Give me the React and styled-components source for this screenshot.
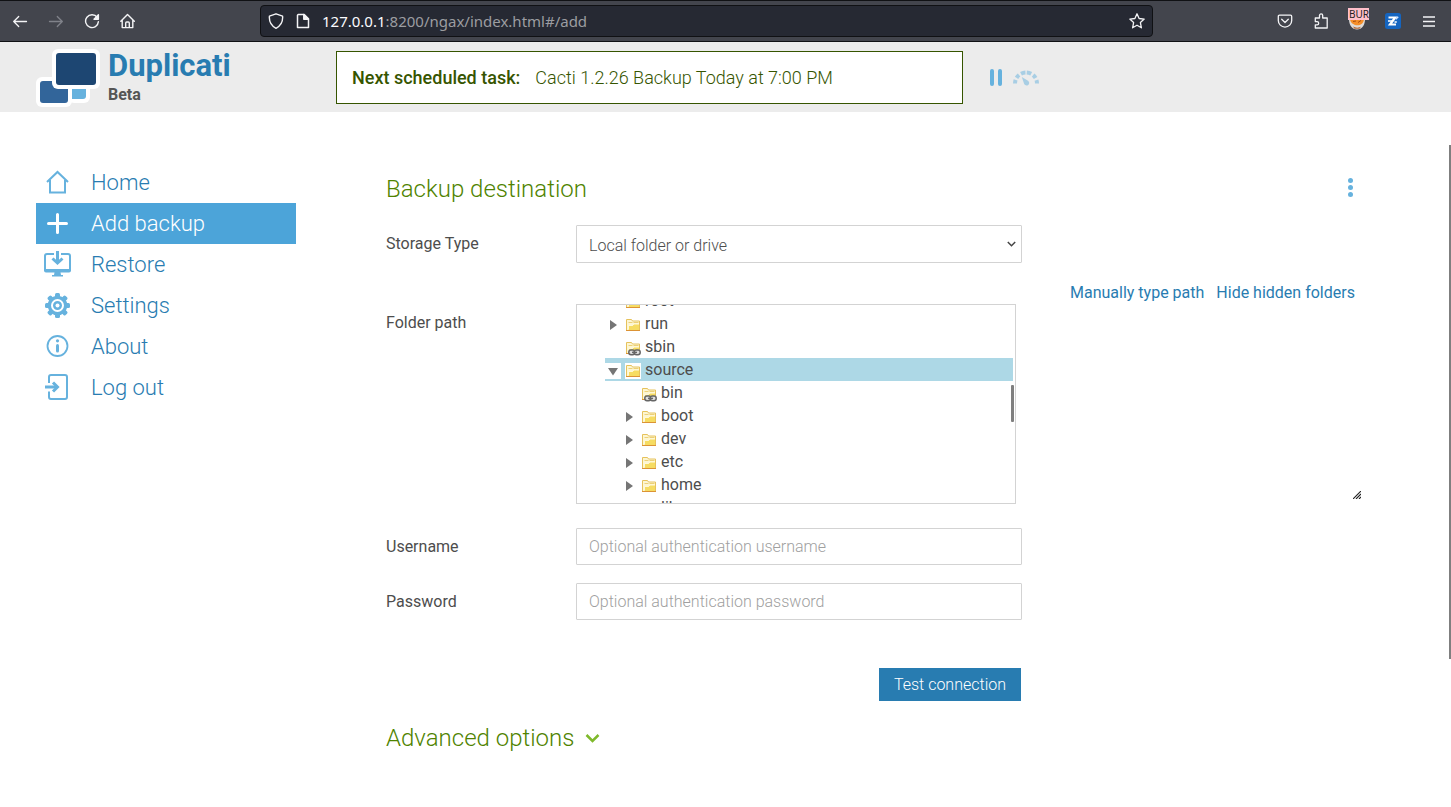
import React, { useState } from 'react';
import styled, { createGlobalStyle } from 'styled-components';

const GlobalStyle = createGlobalStyle`
  * {
    box-sizing: border-box;
  }

  body {
    margin: 0;
    background-color: #fff;
    color: #4d4d4d;
    font-family: Roboto, 'Noto Sans', sans-serif;
    font-size: 16px;
    line-height: 20px;
  }

  button, input, select {
    font-family: inherit;
    font-size: inherit;
  }

  svg {
    display: block;
    flex: none;
  }
`;

/* Browser toolbar */

const BrowserBar = styled.div`
  display: flex;
  align-items: center;
  justify-content: space-between;
  height: 42px;
  padding: 0 4px 0 2px;
  background-color: #43454d;
  border-top: 1px solid #101114;
  border-bottom: 1px solid #101114;
`;

const BarGroup = styled.div`
  display: flex;
  align-items: center;
`;

const BarButton = styled.button`
  display: flex;
  align-items: center;
  justify-content: center;
  width: 36px;
  height: 32px;
  padding: 0;
  border: 0;
  background: none;
  color: ${(props) => (props.disabled ? '#80828a' : '#f4f4f6')};
`;

const UrlBar = styled.div`
  display: flex;
  align-items: center;
  flex: 0 1 893px;
  gap: 11px;
  height: 32px;
  padding: 0 7px;
  background-color: #262933;
  border: 1px solid #101114;
  border-radius: 4px;
  color: #f4f4f6;
`;

const Url = styled.div`
  flex: 1;
  color: #9c9da1;
  font-family: 'Noto Sans', sans-serif;
  font-size: 15px;

  span {
    color: #fbfbfe;
  }
`;

const Extension = styled.span`
  position: relative;
  display: block;
`;

const ExtensionBadge = styled.span`
  position: absolute;
  top: -4px;
  left: 0;
  width: 21px;
  height: 12px;
  padding-left: 1px;
  overflow: hidden;
  background-color: #ffc0cb;
  color: #222;
  font-family: 'Noto Sans', sans-serif;
  font-size: 10px;
  line-height: 12px;
`;

/* Application header */

const Header = styled.header`
  display: grid;
  grid-template-columns: 260px minmax(0, 627px) auto;
  align-items: center;
  height: 70px;
  padding: 1px 36px 0;
  background-color: #ececec;
`;

const Brand = styled.a`
  display: flex;
  align-items: center;
  gap: 8px;
  text-decoration: none;
`;

const BrandName = styled.div`
  color: #287cb1;
  font-size: 31px;
  font-weight: 700;
  line-height: 34px;
`;

const BrandChannel = styled.div`
  color: #555;
  font-size: 16px;
  font-weight: 700;
  line-height: 24px;
`;

const StatusBar = styled.div`
  display: grid;
  grid-template-columns: minmax(0, 627px) auto;
  grid-column: 2 / 4;
  align-items: center;
  gap: 27px;
  padding-left: 40px;
`;

const StatusBox = styled.div`
  display: flex;
  align-items: center;
  gap: 15px;
  height: 53px;
  padding: 0 15px;
  background-color: #fff;
  border: 1px solid #365500;
  color: #365500;
  font-size: 18px;
  font-weight: 300;

  strong {
    font-weight: 500;
  }
`;

const StatusControls = styled.div`
  display: flex;
  align-items: center;
  gap: 10px;
`;

const IconButton = styled.button`
  display: flex;
  padding: 0;
  border: 0;
  background: none;
  color: #66b2de;
  cursor: pointer;
  opacity: ${(props) => (props.$faded ? 0.5 : 1)};
`;

/* Page body */

const Page = styled.div`
  display: grid;
  grid-template-columns: 260px minmax(0, 1fr);
  column-gap: 90px;
  padding: 50px 86px 40px 36px;
`;

const Menu = styled.nav`
  display: flex;
  flex-direction: column;
`;

const MenuLink = styled.a`
  display: flex;
  align-items: center;
  gap: 18px;
  height: 41px;
  padding-left: 6px;
  background-color: ${(props) => (props.$active ? '#4ca4d9' : 'transparent')};
  color: ${(props) => (props.$active ? '#fff' : '#287cb1')};
  font-size: 22px;
  font-weight: 300;
  text-decoration: none;

  svg {
    color: ${(props) => (props.$active ? '#fff' : '#66b2de')};
  }
`;

const Content = styled.main`
  display: grid;
  grid-template-columns: minmax(0, 636px) minmax(0, 1fr);
  column-gap: 48px;
`;

const Form = styled.form`
  display: flex;
  flex-direction: column;
`;

const Title = styled.h2`
  margin: 0;
  padding: 12px 0 21px;
  color: #4f8300;
  font-size: 24px;
  font-weight: 300;
  line-height: 30px;
`;

const Field = styled.div`
  display: grid;
  grid-template-columns: 190px minmax(0, 1fr);
  align-items: start;
  margin-bottom: ${(props) => props.$space || 18}px;
`;

const Label = styled.label`
  padding-top: 9px;
`;

const SelectWrap = styled.div`
  position: relative;

  svg {
    position: absolute;
    top: 15px;
    right: 6px;
    pointer-events: none;
  }
`;

const Select = styled.select`
  display: block;
  width: 100%;
  height: 38px;
  padding: 2px 12px 0;
  appearance: none;
  background-color: #fff;
  border: 1px solid #d3d3d3;
  border-radius: 1px;
  color: #4d4d4d;
  font-weight: 300;
`;

const TextInput = styled.input`
  display: block;
  width: 100%;
  height: 37px;
  padding: 0 12px;
  border: 1px solid #d3d3d3;
  border-radius: 1px;
  color: #4d4d4d;
  font-weight: 300;

  &::placeholder {
    color: #a0a0a0;
    opacity: 1;
  }
`;

const TreeBox = styled.div`
  position: relative;
  height: 200px;
  margin-right: 6px;
  overflow: hidden;
  border: 1px solid #d3d3d3;
`;

const TreeList = styled.ul`
  margin: -16px 2px 0 28px;
  padding: 0;
  list-style: none;
`;

const TreeRow = styled.li`
  display: flex;
  align-items: flex-end;
  gap: 4px;
  height: 23px;
  padding: 0 0 2px ${(props) => props.$level * 16}px;
  background-color: ${(props) => (props.$selected ? '#add8e6' : 'transparent')};
`;

const TreeToggle = styled.button`
  width: 16px;
  height: 16px;
  padding: 0;
  border: 0;
  background-color: #fff;
`;

const TreeIcon = styled.span`
  width: 16px;
  height: 16px;
  background-color: #fff;
`;

const TreeName = styled.span`
  line-height: 18px;
`;

const TreeThumb = styled.span`
  position: absolute;
  top: 80px;
  right: 1px;
  width: 3px;
  height: 37px;
  background-color: #7f7f7f;
  border-radius: 1px;
`;

const Actions = styled.div`
  display: flex;
  justify-content: flex-end;
  padding: 30px 1px 20px 0;
`;

const PrimaryButton = styled.button`
  height: 33px;
  padding: 0 15px;
  border: 0;
  background-color: #287cb1;
  color: #fff;
  font-weight: 300;
  cursor: pointer;
`;

const AdvancedToggle = styled.button`
  display: flex;
  align-items: center;
  align-self: flex-start;
  gap: 11px;
  padding: 0;
  border: 0;
  background: none;
  color: #4f8300;
  font-size: 24px;
  font-weight: 300;
  line-height: 34px;
  cursor: pointer;
`;

const Side = styled.aside`
  display: flex;
  flex-direction: column;
  align-items: flex-end;
  padding: 16px 4px 0 0;
`;

const SideMenu = styled.div`
  padding-right: 8px;
`;

const PathLinks = styled.div`
  display: flex;
  align-self: flex-start;
  gap: 12px;
  padding: 86px 0 188px;
  white-space: nowrap;

  a {
    color: #287cb1;
    text-decoration: none;
  }
`;

const PageThumb = styled.div`
  position: fixed;
  top: 145px;
  right: 0;
  width: 2px;
  height: 514px;
  background-color: #7f7f7f;
`;

/* Icons */

const Line = ({ children, size = 16, width = 1.3 }) => (
  <svg
    width={size}
    height={size}
    viewBox="0 0 16 16"
    fill="none"
    stroke="currentColor"
    strokeWidth={width}
    strokeLinecap="round"
    strokeLinejoin="round"
  >
    {children}
  </svg>
);

const BackIcon = () => (
  <Line><path d="M14.5 8.500H1.700M6.700 3.500l-5 5 5 5" /></Line>
);

const ForwardIcon = () => (
  <Line><path d="M1.500 8.500h12.800M9.300 3.500l5 5-5 5" /></Line>
);

const ReloadIcon = () => (
  <Line width={1.4}>
    <path d="M13.200 4.400A6.400 6.400 0 1 0 14.400 8.600" />
    <path d="M14.400 1.800v4.400H10z" fill="currentColor" />
  </Line>
);

const HomeBarIcon = () => (
  <Line width={1.4}>
    <path d="M.8 8.200 7.500 1.400l6.800 6.800M2.200 7v7.600h10.600V7" />
    <path d="M5.700 14.400V10c0-.6.4-1 1-1h1.600c.6 0 1 .4 1 1v4.400" />
  </Line>
);

const ShieldIcon = () => (
  <Line width={1.4}><path d="M8 .8 14.600 3.200c.4 5-1.700 9.600-6.600 12.100C3.100 12.800 1 8.200 1.400 3.200z" /></Line>
);

const DocIcon = () => (
  <Line width={1.5}>
    <path d="M3.200 1.500h6l4.300 4.300v8.700H2.500v-12.200z" />
    <path d="M8.800 1.500v4.700h4.600z" fill="currentColor" />
  </Line>
);

const StarIcon = () => (
  <Line width={1.3}>
    <path d="m8 .8 2.100 4.700 5.100.6-3.800 3.500 1 5.200L8 12.200l-4.400 2.600 1-5.200L.8 6.100l5.100-.6z" />
  </Line>
);

const PocketIcon = () => (
  <Line width={1.3}>
    <path d="M2.500 2.200h11c.7 0 1.200.5 1.200 1.200v4a6.700 6.700 0 0 1-13.400 0v-4c0-.7.5-1.200 1.200-1.200z" />
    <path d="M4.700 6.300 8 9.500l3.300-3.200" />
  </Line>
);

const PuzzleIcon = () => (
  <Line width={1.3}>
    <path d="M2.300 15V11.800h1.800a1.600 1.600 0 0 0 0-3.200H2.300V5h4.200V2.500a1.600 1.600 0 0 1 3.200 0V5h4.500v10z" />
  </Line>
);

const BurpIcon = () => (
  <svg width="18" height="18" viewBox="0 0 18 18">
    <path d="M1 7h16c0 6-3 10.500-8 10.500S1 13 1 7z" fill="#dfdbd8" />
    <path d="M2 7h14c-.3 4-3 6.300-6.500 6.300S2.300 11 2 7z" fill="#f58f2a" />
    <path d="M5 9.500 8 9M10 10.500l3-2" stroke="#a84d12" />
    <path d="M5 14.500c2.500 1.500 6 1.500 8 0l-1.500 2.300h-5z" fill="#b56837" />
  </svg>
);

const ZIcon = () => (
  <svg width="16" height="16" viewBox="0 0 16 16">
    <rect width="16" height="16" rx="2.500" fill="#1565c0" />
    <path d="M3.500 4.500h6.700L5 11.500h6" fill="none" stroke="#fff" strokeWidth="2.200" />
    <path d="M3 8h4M9.500 9h2.300" stroke="#fff" strokeWidth="1.500" />
    <path d="m10.700 6.200 2.500-2.400" stroke="#cfe3ff" strokeWidth="1.500" />
  </svg>
);

const BarsIcon = () => (
  <svg width="12" height="11" viewBox="0 0 12 11">
    <path d="M0 1h12M0 5.500h12M0 10h12" stroke="currentColor" strokeWidth="1.300" />
  </svg>
);

const Logo = () => (
  <svg width="64" height="58" viewBox="0 0 64 58">
    <rect x="32" y="26" width="22" height="28" rx="6" fill="#fff" />
    <path d="M36 39h14v8a3 3 0 0 1-3 3H36z" fill="#66b2de" />
    <rect x="0" y="28" width="36" height="30" rx="6" fill="#fff" />
    <rect x="4" y="32" width="28" height="22" rx="3" fill="#32659a" />
    <rect x="16" y="0" width="48" height="40" rx="6" fill="#fff" />
    <rect x="20" y="4" width="40" height="32" rx="3" fill="#1d4672" />
  </svg>
);

const PauseIcon = () => (
  <svg width="12" height="17" viewBox="0 0 12 17" fill="currentColor">
    <rect width="4" height="17" rx="2" />
    <rect x="8" width="4" height="17" rx="2" />
  </svg>
);

const GaugeIcon = () => (
  <svg width="28" height="16" viewBox="0 0 28 16">
    <path
      d="M3 13.500a11 11 0 0 1 22 0"
      fill="none"
      stroke="currentColor"
      strokeWidth="4"
      strokeDasharray="3.600 2.300 3.800 2.300 4.600 1.360 4.600 2.300 3.800 2.300 3.600"
    />
    <path d="M9.800 7 16 10.700a2.600 2.600 0 1 1-3.900 3z" fill="currentColor" />
  </svg>
);

const MenuIcon = ({ children }) => (
  <svg width="31" height="31" viewBox="0 0 31 31" fill="none" stroke="currentColor" strokeWidth="2">
    {children}
  </svg>
);

const HomeIcon = () => (
  <MenuIcon>
    <path d="M5 15 15.500 5 26 15M8 13v12.500h15V13" />
  </MenuIcon>
);

const AddIcon = () => (
  <MenuIcon>
    <path d="M15.500 6.500v18M6.500 15.500h18" strokeWidth="3" strokeLinecap="round" />
  </MenuIcon>
);

const RestoreIcon = () => (
  <MenuIcon>
    <path d="M12 5H5a2 2 0 0 0-2 2v14h25V7a2 2 0 0 0-2-2h-7" />
    <path d="M2 20h27v1.500a2 2 0 0 1-2 2h-8.500l.5 2.500h2v1.500H10V26h2l.5-2.500H4a2 2 0 0 1-2-2z" fill="currentColor" stroke="none" />
    <path d="M15.500 2v11" strokeWidth="3" />
    <path d="m10.500 9.500 5 4.500 5-4.500" strokeWidth="3" />
  </MenuIcon>
);

const GearIcon = () => (
  <MenuIcon>
    {[0, 45, 90, 135].map((angle) => (
      <rect
        key={angle}
        x="13"
        y="3"
        width="5"
        height="25"
        rx="1.500"
        fill="currentColor"
        stroke="none"
        transform={`rotate(${angle} 15.500 15.500)`}
      />
    ))}
    <circle cx="15.500" cy="15.500" r="9.800" fill="currentColor" stroke="none" />
    <circle cx="15.500" cy="15.500" r="5.500" stroke="#fff" fill="none" />
    <circle cx="15.500" cy="15.500" r="2" fill="#fff" stroke="none" />
  </MenuIcon>
);

const InfoIcon = () => (
  <MenuIcon>
    <circle cx="15.500" cy="15" r="10" strokeWidth="1.800" />
    <circle cx="15.500" cy="9.800" r="1.600" fill="currentColor" stroke="none" />
    <path d="M15.500 14.500V20" strokeWidth="3" strokeLinecap="round" />
  </MenuIcon>
);

const LogoutIcon = () => (
  <MenuIcon>
    <path d="M7 11V5a2 2 0 0 1 2-2h14a2 2 0 0 1 2 2v20a2 2 0 0 1-2 2H9a2 2 0 0 1-2-2V19.500" />
    <path d="M3 15h12" strokeWidth="3" />
    <path d="m11 10.500 4.500 4.500-4.500 4.500" strokeWidth="3" />
  </MenuIcon>
);

const SelectArrow = () => (
  <svg width="9" height="8" viewBox="0 0 9 8">
    <path d="m.8 2 3.700 3.700L8.200 2" fill="none" stroke="#444" strokeWidth="1.500" />
  </svg>
);

const ChevronIcon = () => (
  <svg width="15" height="12" viewBox="0 0 15 12">
    <path d="m1.500 3 6 6 6-6" fill="none" stroke="#7fb92b" strokeWidth="2.500" />
  </svg>
);

const DotsIcon = () => (
  <svg width="5" height="19" viewBox="0 0 5 19" fill="currentColor">
    <circle cx="2.500" cy="2.500" r="2.500" />
    <circle cx="2.500" cy="9.500" r="2.500" />
    <circle cx="2.500" cy="16.500" r="2.500" />
  </svg>
);

const GripIcon = () => (
  <svg width="8" height="8" viewBox="0 0 8 8">
    <path d="M0 8 8 0M3 8l5-5M6 8l2-2" stroke="#222" strokeWidth="1.100" />
  </svg>
);

const Triangle = ({ open }) => (
  <svg width="16" height="16" viewBox="0 0 16 16">
    <path d={open ? 'M3 5h10l-5 7.500z' : 'M5 3l7 5-7 5z'} fill="#757575" />
  </svg>
);

const FolderIcon = ({ linked }) => (
  <svg width="16" height="16" viewBox="0 0 16 16">
    <path d="M1.500 13.500v-11h5l1 1.500h7v9.500z" fill="#fdf6d2" stroke="#e6c25c" />
    <path d="M3.500 5.500h4M8.500 5.500h5" stroke="#ecd078" />
    <path d="M3.500 13V9h4l1.500-2h5v6z" fill="#f6dc62" />
    <path d="M3.500 12.500V8.500h4L9 7h5" fill="none" stroke="#fff8d8" />
    <path d="M1 13.500h14" stroke="#dc9335" />
    {linked && (
      <g fill="#ddd" stroke="#666" strokeWidth="1.500">
        <rect x="3.800" y="10" width="6" height="4.800" rx="2.200" />
        <rect x="9.200" y="10" width="6" height="4.800" rx="2.200" />
        <path d="M7 12.400h5" />
      </g>
    )}
  </svg>
);

const menuItems = [
  { label: 'Home', href: '#/', Icon: HomeIcon },
  { label: 'Add backup', href: '#/add', Icon: AddIcon },
  { label: 'Restore', href: '#/restore', Icon: RestoreIcon },
  { label: 'Settings', href: '#/settings', Icon: GearIcon },
  { label: 'About', href: '#/about', Icon: InfoIcon },
  { label: 'Log out', href: '#/logout', Icon: LogoutIcon },
];

const folders = [
  { name: 'root', level: 0, leaf: true },
  { name: 'run', level: 0 },
  { name: 'sbin', level: 0, leaf: true, linked: true },
  { name: 'source', level: 0, open: true },
  { name: 'bin', level: 1, leaf: true, linked: true },
  { name: 'boot', level: 1 },
  { name: 'dev', level: 1 },
  { name: 'etc', level: 1 },
  { name: 'home', level: 1 },
  { name: 'lib', level: 1, leaf: true, linked: true },
];

const BrowserToolbar = () => (
  <BrowserBar>
    <BarGroup>
      <BarButton aria-label="Back"><BackIcon /></BarButton>
      <BarButton aria-label="Forward" disabled><ForwardIcon /></BarButton>
      <BarButton aria-label="Reload"><ReloadIcon /></BarButton>
      <BarButton aria-label="Browser home"><HomeBarIcon /></BarButton>
    </BarGroup>
    <UrlBar>
      <ShieldIcon />
      <DocIcon />
      <Url><span>127.0.0.1</span>:8200/ngax/index.html#/add</Url>
      <StarIcon />
    </UrlBar>
    <BarGroup>
      <BarButton aria-label="Pocket"><PocketIcon /></BarButton>
      <BarButton aria-label="Extensions"><PuzzleIcon /></BarButton>
      <BarButton aria-label="Proxy">
        <Extension>
          <BurpIcon />
          <ExtensionBadge>BUR</ExtensionBadge>
        </Extension>
      </BarButton>
      <BarButton aria-label="Editor"><ZIcon /></BarButton>
      <BarButton aria-label="Menu"><BarsIcon /></BarButton>
    </BarGroup>
  </BrowserBar>
);

const FolderTree = () => {
  const [selected, setSelected] = useState('source');

  return (
    <TreeBox>
      <TreeList aria-labelledby="folder-label">
        {folders.map(({ name, level, leaf, open, linked }) => (
          <TreeRow
            key={name}
            $level={level}
            $selected={name === selected}
            onClick={() => setSelected(name)}
          >
            {leaf ? (
              <TreeIcon />
            ) : (
              <TreeToggle type="button" aria-label={`Toggle ${name}`}>
                <Triangle open={open} />
              </TreeToggle>
            )}
            <TreeIcon><FolderIcon linked={linked} /></TreeIcon>
            <TreeName>{name}</TreeName>
          </TreeRow>
        ))}
      </TreeList>
      <TreeThumb />
    </TreeBox>
  );
};

const App = () => {
  return (
    <>
      <GlobalStyle />
      <BrowserToolbar />
      <Header>
        <Brand href="#/">
          <Logo />
          <div>
            <BrandName>Duplicati</BrandName>
            <BrandChannel>Beta</BrandChannel>
          </div>
        </Brand>
        <StatusBar>
          <StatusBox>
            <strong>Next scheduled task:</strong>
            <span>Cacti 1.2.26 Backup Today at 7:00 PM</span>
          </StatusBox>
          <StatusControls>
            <IconButton aria-label="Pause"><PauseIcon /></IconButton>
            <IconButton aria-label="Throttle" $faded><GaugeIcon /></IconButton>
          </StatusControls>
        </StatusBar>
      </Header>
      <Page>
        <Menu>
          {menuItems.map(({ label, href, Icon }) => (
            <MenuLink key={href} href={href} $active={href === '#/add'}>
              <Icon />
              {label}
            </MenuLink>
          ))}
        </Menu>
        <Content>
          <Form>
            <Title>Backup destination</Title>
            <Field $space={41}>
              <Label htmlFor="storage">Storage Type</Label>
              <SelectWrap>
                <Select id="storage">
                  <option>Local folder or drive</option>
                </Select>
                <SelectArrow />
              </SelectWrap>
            </Field>
            <Field $space={24}>
              <Label as="span" id="folder-label">Folder path</Label>
              <FolderTree />
            </Field>
            <Field>
              <Label htmlFor="username">Username</Label>
              <TextInput id="username" placeholder="Optional authentication username" />
            </Field>
            <Field>
              <Label htmlFor="password">Password</Label>
              <TextInput id="password" type="password" placeholder="Optional authentication password" />
            </Field>
            <Actions>
              <PrimaryButton type="button">Test connection</PrimaryButton>
            </Actions>
            <AdvancedToggle type="button">
              Advanced options
              <ChevronIcon />
            </AdvancedToggle>
          </Form>
          <Side>
            <SideMenu>
              <IconButton aria-label="More"><DotsIcon /></IconButton>
            </SideMenu>
            <PathLinks>
              <a href="#/manual">Manually type path</a>
              <a href="#/hidden">Hide hidden folders</a>
            </PathLinks>
            <GripIcon />
          </Side>
        </Content>
      </Page>
      <PageThumb />
    </>
  );
};

export default App;
